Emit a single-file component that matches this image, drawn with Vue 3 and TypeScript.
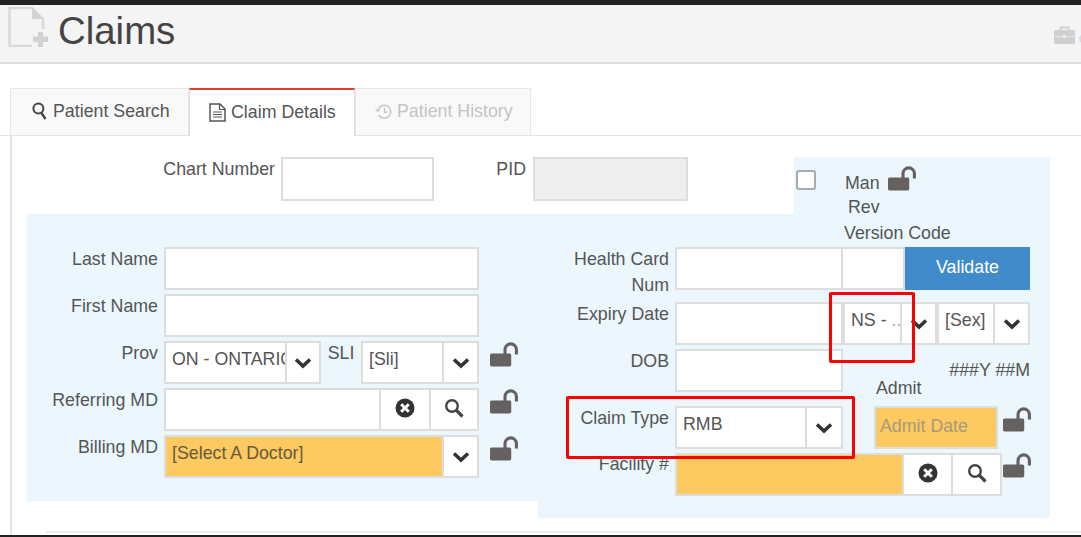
<script setup lang="ts">
const leftLock = true
</script>

<template>
  <div class="page">
    <svg class="sprite" aria-hidden="true">
      <defs>
        <symbol id="lock" viewBox="0 0 28 24">
          <rect x="0" y="11" width="20.5" height="12.5" rx="1.5" fill="#666161" />
          <path d="M14.5 12V7.2a5.4 5.4 0 0 1 11 0V12" fill="none" stroke="#666161" stroke-width="3" />
        </symbol>
        <symbol id="chev" viewBox="0 0 18 12">
          <polyline points="2,2.5 9,9 16,2.5" fill="none" stroke="#333" stroke-width="3.6" />
        </symbol>
        <symbol id="clear" viewBox="0 0 20 20">
          <circle cx="10" cy="10" r="9.5" fill="#333" />
          <path d="M6.2 6.2l7.6 7.6M13.8 6.2l-7.6 7.6" stroke="#fff" stroke-width="3" />
        </symbol>
        <symbol id="search" viewBox="0 0 20 20">
          <circle cx="8" cy="8" r="5.8" fill="none" stroke="#444" stroke-width="2.4" />
          <path d="M12.2 12.2L18.5 18.5" stroke="#444" stroke-width="3.2" />
        </symbol>
      </defs>
    </svg>

    <div class="topbar"></div>

    <header class="header">
      <svg class="doc-icon" width="40" height="40" viewBox="0 0 40 40">
        <path d="M24 39H1.5V1H24L35 12V22" fill="none" stroke="#d8d8d8" stroke-width="2.4" />
        <path d="M24 1L35 12H24Z" fill="#d2d2d2" />
        <rect x="25" y="29.5" width="15" height="5.5" fill="#d2d2d2" />
        <rect x="30" y="25" width="5" height="15" fill="#d2d2d2" />
      </svg>
      <h1 class="title">Claims</h1>
      <svg class="case-icon" width="21" height="18" viewBox="0 0 21 18">
        <path d="M6.5 4V1.5h8V4" fill="none" stroke="#d0d0d0" stroke-width="2" />
        <rect x="0" y="4" width="21" height="14" rx="1.5" fill="#d0d0d0" />
        <rect x="0" y="10" width="21" height="1" fill="#e6e6e6" />
        <rect x="9" y="9" width="3" height="3" fill="#eee" />
      </svg>
      <span class="edge-dot"></span>
    </header>

    <nav class="tabs">
      <div class="tab tab-first">
        <svg width="15" height="18" viewBox="0 0 15 18">
          <circle cx="6.4" cy="6.6" r="5" fill="none" stroke="#444" stroke-width="2" />
          <path d="M9.5 11l4 6" stroke="#444" stroke-width="2.4" />
        </svg>
        <span>Patient Search</span>
      </div>
      <div class="tab tab-active">
        <svg width="17" height="19" viewBox="0 0 17 19">
          <path d="M1 1h10l5 5v12H1Z" fill="none" stroke="#555" stroke-width="1.5" />
          <path d="M10.5 1v5.5H16" fill="none" stroke="#555" stroke-width="1.2" />
          <path d="M4 9h9M4 11.5h9M4 14h9" stroke="#555" stroke-width="1.2" />
        </svg>
        <span>Claim Details</span>
      </div>
      <div class="tab tab-muted">
        <svg width="17" height="17" viewBox="0 0 17 17">
          <path d="M3.2 6.5a6.5 6.5 0 1 1 .6 5.8" fill="none" stroke="#c8c8c8" stroke-width="1.6" />
          <path d="M0 6.2h5.5L2.8 9.4Z" fill="#c8c8c8" />
          <path d="M9.5 4.5v4.7h3" fill="none" stroke="#c8c8c8" stroke-width="1.5" />
        </svg>
        <span>Patient History</span>
      </div>
    </nav>

    <main class="panel">
      <section class="top-row">
        <label class="top-label chart-label">Chart Number</label>
        <input class="field chart-input" type="text" />
        <label class="top-label pid-label">PID</label>
        <input class="field pid-input" type="text" disabled />
        <div class="man-block">
          <div class="man-line">
            <input class="check" type="checkbox" />
            <span class="man-text">Man</span>
            <svg class="lock man-lock"><use href="#lock" /></svg>
          </div>
          <div class="rev-line">Rev</div>
        </div>
      </section>

      <section class="main-row">
        <div class="left-panel">
          <div class="row">
            <label class="lbl">Last Name</label>
            <input class="field w-full" type="text" />
          </div>
          <div class="row">
            <label class="lbl">First Name</label>
            <input class="field w-full" type="text" />
          </div>
          <div class="row">
            <label class="lbl">Prov</label>
            <div class="select prov">
              <span class="sel-text">ON - ONTARIO</span>
              <span class="cell arrow-cell"><svg class="chev"><use href="#chev" /></svg></span>
            </div>
            <label class="sli-label">SLI</label>
            <div class="select sli">
              <span class="sel-text">[Sli]</span>
              <span class="cell arrow-cell"><svg class="chev"><use href="#chev" /></svg></span>
            </div>
            <svg v-if="leftLock" class="lock row-lock"><use href="#lock" /></svg>
          </div>
          <div class="row">
            <label class="lbl">Referring MD</label>
            <div class="select w-full">
              <span class="sel-text"></span>
              <span class="cell btn-cell"><svg class="clear"><use href="#clear" /></svg></span>
              <span class="cell btn-cell last-btn"><svg class="search"><use href="#search" /></svg></span>
            </div>
            <svg class="lock row-lock"><use href="#lock" /></svg>
          </div>
          <div class="row">
            <label class="lbl">Billing MD</label>
            <div class="select w-full">
              <span class="sel-text orange">[Select A Doctor]</span>
              <span class="cell arrow-cell"><svg class="chev"><use href="#chev" /></svg></span>
            </div>
            <svg class="lock row-lock"><use href="#lock" /></svg>
          </div>
        </div>

        <div class="right-panel">
          <div class="vc-line">Version Code</div>

          <div class="row r-health">
            <label class="lbl r-lbl hc-lbl">Health Card Num</label>
            <input class="field hc-input" type="text" />
            <input class="field vc-input" type="text" />
            <button class="validate" type="button">Validate</button>
          </div>

          <div class="row r-expiry">
            <label class="lbl r-lbl">Expiry Date</label>
            <input class="field hc-input" type="text" />
            <div class="select ns">
              <span class="sel-text ns-text">NS - <i>..</i></span>
              <span class="cell arrow-cell"><svg class="chev"><use href="#chev" /></svg></span>
            </div>
            <div class="select sex">
              <span class="sel-text">[Sex]</span>
              <span class="cell arrow-cell"><svg class="chev"><use href="#chev" /></svg></span>
            </div>
          </div>

          <div class="split">
            <div class="split-left">
              <div class="row r-dob">
                <label class="lbl r-lbl">DOB</label>
                <input class="field hc-input" type="text" />
              </div>
              <div class="row r-claim">
                <label class="lbl r-lbl">Claim Type</label>
                <div class="select claim">
                  <span class="sel-text">RMB</span>
                  <span class="cell arrow-cell"><svg class="chev"><use href="#chev" /></svg></span>
                </div>
              </div>
            </div>
            <div class="split-right">
              <div class="age">###Y ##M</div>
              <div class="admit-label">Admit</div>
              <div class="admit-row">
                <input class="field admit-input" type="text" placeholder="Admit Date" />
                <svg class="lock admit-lock"><use href="#lock" /></svg>
              </div>
            </div>
          </div>

          <div class="row r-facility">
            <label class="lbl r-lbl fac-lbl">Facility #</label>
            <div class="select facility">
              <span class="sel-text orange"></span>
              <span class="cell btn-cell fac-btn"><svg class="clear"><use href="#clear" /></svg></span>
              <span class="cell btn-cell fac-btn"><svg class="search"><use href="#search" /></svg></span>
            </div>
            <svg class="lock fac-lock"><use href="#lock" /></svg>
          </div>
        </div>
      </section>

      <div class="foot-line"></div>
    </main>

    <div class="bottombar"></div>

    <div class="mark mark-ns"></div>
    <div class="mark mark-claim"></div>
  </div>
</template>

<style>
html,
body {
  margin: 0;
  background: #fff;
}
</style>

<style scoped>
.page {
  position: relative;
  display: flex;
  flex-direction: column;
  width: 1081px;
  height: 537px;
  overflow: hidden;
  font-family: "Liberation Sans", Arial, sans-serif;
  font-size: 17.8px;
  color: #555;
  background: #fff;
}
.sprite {
  position: absolute;
  width: 0;
  height: 0;
}
.topbar {
  flex: none;
  height: 5px;
  background: #222;
}
.bottombar {
  flex: none;
  height: 2px;
  background: #222;
}
.header {
  flex: none;
  display: flex;
  align-items: flex-start;
  box-sizing: border-box;
  height: 59px;
  padding-left: 8px;
  background: #f4f4f4;
  border-bottom: 2px solid #ddd;
  overflow: hidden;
}
.doc-icon {
  flex: none;
  margin-top: 2px;
}
.title {
  margin: 4px 0 0 10px;
  font-size: 38.4px;
  font-weight: 400;
  line-height: 44px;
  color: #444;
}
.case-icon {
  flex: none;
  margin: 21px 0 0 auto;
}
.edge-dot {
  flex: none;
  width: 8px;
  height: 8px;
  margin: 30px -6px 0 4px;
  border-radius: 50%;
  background: #d5dde2;
}
.tabs {
  flex: none;
  display: flex;
  box-sizing: border-box;
  height: 48px;
  margin-top: 24px;
  padding-left: 10px;
  border-bottom: 1px solid #e2e2e2;
}
.tab {
  display: flex;
  align-items: center;
  gap: 6px;
  box-sizing: border-box;
  height: 47px;
  padding-bottom: 2px;
  background: #f9f9f9;
  border: 1px solid #e8e8e8;
  border-bottom: none;
}
.tab-first {
  width: 179px;
  padding-left: 21px;
}
.tab-active {
  width: 166px;
  padding-left: 19px;
  height: 48px;
  gap: 5px;
  background: #fff;
  border-top: 2px solid #d9432f;
  border-left-color: #ddd;
  border-right-color: #ddd;
}
.tab-muted {
  width: 176px;
  padding-left: 19px;
  gap: 5px;
  color: #c4c4c4;
}
.panel {
  flex: 1;
  display: flex;
  flex-direction: column;
  min-height: 0;
  margin-left: 10px;
  padding-top: 21px;
  border-left: 2px solid #e6e6e6;
}
.top-row {
  flex: none;
  display: flex;
  align-items: flex-start;
  height: 57px;
}
.top-label {
  flex: none;
  line-height: 24px;
  text-align: right;
}
.chart-label {
  width: 263px;
}
.pid-label {
  width: 92px;
}
.man-block {
  position: relative;
  z-index: 1;
  box-sizing: border-box;
  width: 256px;
  height: 57px;
  margin-left: 106px;
  background: #ebf7fd;
}
.man-line {
  display: flex;
  align-items: flex-start;
  height: 38px;
  padding-left: 2px;
}
.check {
  appearance: none;
  box-sizing: border-box;
  width: 20px;
  height: 20px;
  margin: 13px 0 0;
  background: #fff;
  border: 2px solid #aaa;
  border-radius: 3px;
}
.man-text {
  margin: 14px 0 0 29px;
  line-height: 24px;
}
.lock {
  flex: none;
  display: block;
  width: 29px;
  height: 25px;
}
.man-lock {
  margin: 9px 0 0 8px;
}
.rev-line {
  margin-left: 54px;
  line-height: 24px;
}
.main-row {
  flex: none;
  display: flex;
  align-items: flex-start;
  padding-left: 15px;
}
.left-panel {
  box-sizing: border-box;
  display: flex;
  flex-direction: column;
  gap: 4px;
  width: 511px;
  height: 287px;
  padding-top: 33px;
  background: #ebf7fd;
}
.row {
  display: flex;
  align-items: flex-start;
  flex: none;
  height: 43px;
}
.lbl {
  flex: none;
  width: 131px;
  margin-right: 6px;
  line-height: 24px;
  text-align: right;
}
.field {
  display: block;
  flex: none;
  box-sizing: border-box;
  margin: 0;
  padding: 0 6px;
  font: inherit;
  color: #555;
  background: #fff;
  border: 2px solid #ddd;
  border-radius: 0;
  outline: none;
}
.chart-input {
  width: 153px;
  height: 44px;
  margin-left: 6px;
}
.pid-input {
  width: 155px;
  height: 44px;
  margin-left: 7px;
  background: #eee;
}
.w-full {
  flex: none;
  width: 315px;
  height: 43px;
}
.select {
  display: flex;
  flex: none;
  box-sizing: border-box;
  height: 43px;
  background: #fff;
  border: 2px solid #ddd;
}
.sel-text {
  flex: 1;
  min-width: 0;
  padding: 0 0 6px 6px;
  overflow: hidden;
  white-space: nowrap;
  line-height: 33px;
}
.orange {
  background: #fdc961;
  color: #665a3c;
}
.cell {
  display: flex;
  flex: none;
  align-items: center;
  justify-content: center;
  box-sizing: border-box;
  background: #fff;
  border-left: 2px solid #ddd;
}
.arrow-cell {
  width: 35px;
}
.chev {
  display: block;
  width: 18px;
  height: 12px;
}
.clear {
  display: block;
  width: 20px;
  height: 20px;
  margin-bottom: 3px;
}
.search {
  display: block;
  width: 20px;
  height: 20px;
  margin-bottom: 3px;
}
.btn-cell {
  width: 50px;
}
.last-btn {
  width: 48px;
}
.prov {
  width: 157px;
}
.prov .arrow-cell {
  width: 34px;
}
.sli-label {
  flex: none;
  width: 40px;
  line-height: 24px;
  text-align: center;
}
.sli {
  width: 118px;
}
.row-lock {
  margin: 1px 0 0 11px;
}
.right-panel {
  box-sizing: border-box;
  width: 512px;
  height: 304px;
  background: #ebf7fd;
}
.vc-line {
  height: 33px;
  margin-left: 306px;
  padding-top: 7px;
  box-sizing: border-box;
  line-height: 24px;
}
.hc-lbl {
  box-sizing: border-box;
  margin-top: -1px;
  padding-left: 30px;
  line-height: 26px;
}
.hc-input {
  width: 168px;
  height: 43px;
}
.vc-input {
  width: 62px;
  height: 43px;
  border-left: none;
}
.validate {
  flex: none;
  width: 125px;
  height: 43px;
  padding: 0 0 3px;
  font: inherit;
  color: #fff;
  background: #428bca;
  border: none;
  border-radius: 0;
}
.r-expiry {
  margin-top: 12px;
}
.ns {
  width: 94px;
}
.ns .sel-text {
  text-overflow: clip;
}
.ns-text i {
  font-style: normal;
  color: #a8a8a8;
}
.sex {
  width: 93px;
}
.split {
  display: flex;
  margin-top: 4px;
}
.split-left {
  flex: none;
  width: 305px;
}
.r-claim {
  margin-top: 14px;
}
.claim {
  width: 168px;
}
.claim .arrow-cell {
  width: 36px;
}
.split-right {
  flex: none;
  box-sizing: border-box;
  width: 156px;
  margin-left: 31px;
}
.age {
  margin-top: 9px;
  line-height: 24px;
  text-align: right;
}
.admit-label {
  margin: -6px 0 0 2px;
  line-height: 24px;
}
.admit-row {
  display: flex;
  margin-top: 6px;
}
.admit-input {
  width: 124px;
  height: 43px;
  padding: 0 4px 2px;
  background: #fdc961;
}
.admit-input::placeholder {
  color: #a89a78;
  opacity: 1;
}
.admit-lock {
  margin: 1px 0 0 5px;
}
.r-facility {
  margin-top: 4px;
}
.fac-lbl {
  margin-top: -1px;
}
.facility {
  width: 327px;
}
.fac-btn {
  width: 49px;
}
.fac-lock {
  margin: 0 0 0 1px;
}
.foot-line {
  flex: none;
  height: 2px;
  margin: 13px 0 0 34px;
  background: #eee;
}
.mark {
  position: absolute;
  box-sizing: border-box;
  border: 3px solid #f00;
  border-radius: 2px;
}
.mark-ns {
  left: 829px;
  top: 292px;
  width: 86px;
  height: 71px;
}
.mark-claim {
  left: 566px;
  top: 396px;
  width: 289px;
  height: 63px;
}
</style>
